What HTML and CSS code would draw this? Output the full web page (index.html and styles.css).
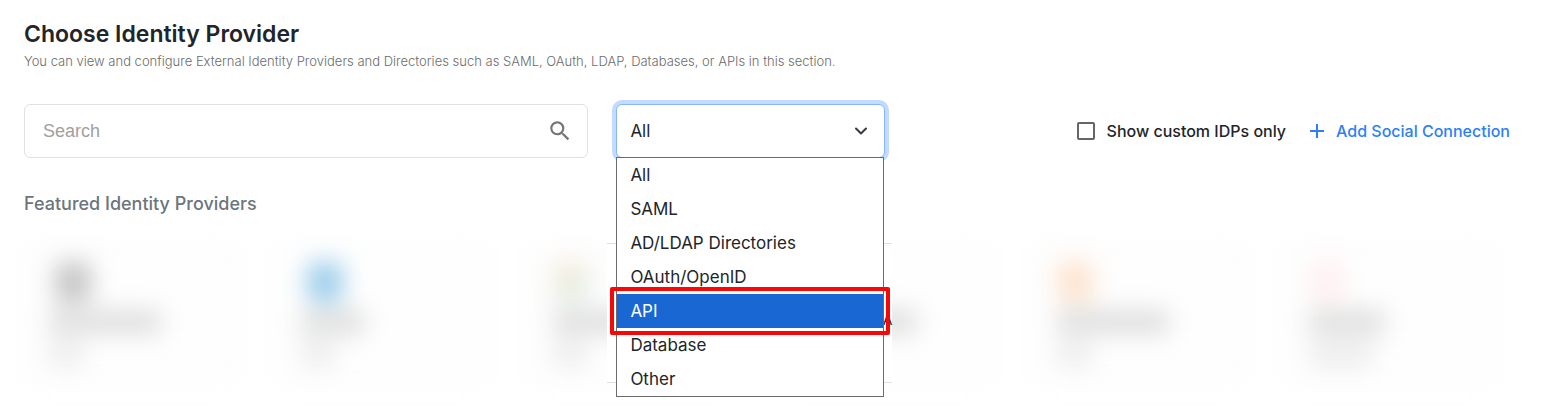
FILE: index.html
```html
<!DOCTYPE html>
<html lang="en">

<head>
  <meta charset="utf-8" />
  <meta name="viewport" content="width=device-width, initial-scale=1">
  <title>Choose Identity Provider</title>
  <link rel="stylesheet" href="styles.css">
</head>

<body>
  <main class="page">
    <h1 class="title">Choose Identity Provider</h1>
    <p class="subtitle">You can view and configure External Identity Providers and Directories such as SAML, OAuth, LDAP, Databases, or APIs in this section.</p>

    <div class="toolbar">
      <div class="search">
        <input type="text" id="search" placeholder="Search" aria-label="Search">
        <svg class="search-icon" viewBox="0 0 24 24" width="26" height="26" aria-hidden="true">
          <path fill="#757575" d="M15.5 14h-.79l-.28-.27A6.471 6.471 0 0 0 16 9.5 6.5 6.5 0 1 0 9.5 16c1.61 0 3.09-.59 4.23-1.57l.27.28v.79l5 4.99L20.49 19l-4.99-5zm-6 0C7.01 14 5 11.99 5 9.5S7.01 5 9.5 5 14 7.01 14 9.5 11.99 14 9.5 14z" />
        </svg>
      </div>

      <div class="filter">
        <select id="type" aria-label="Provider type">
          <option>All</option>
          <option>SAML</option>
          <option>AD/LDAP Directories</option>
          <option>OAuth/OpenID</option>
          <option>API</option>
          <option>Database</option>
          <option>Other</option>
        </select>
        <svg class="chevron" viewBox="0 0 16 16" width="16" height="16" aria-hidden="true">
          <path fill="none" stroke="#343a40" stroke-width="2" stroke-linecap="round" stroke-linejoin="round" d="m3 5.500 5 5 5-5" />
        </svg>
        <div class="backdrop"><span>A</span></div>
        <ul class="menu" role="listbox" aria-label="Provider type">
          <li role="option">All</li>
          <li role="option">SAML</li>
          <li role="option">AD/LDAP Directories</li>
          <li role="option">OAuth/OpenID</li>
          <li role="option" class="active" aria-selected="true">API</li>
          <li role="option">Database</li>
          <li role="option">Other</li>
        </ul>
      </div>

      <div class="actions">
        <label class="check" for="custom"><input type="checkbox" id="custom">Show custom IDPs only</label>
        <a class="add" href="#">
          <svg viewBox="0 0 14 14" width="14" height="14" aria-hidden="true">
            <path stroke="#2d7ff9" stroke-width="2" d="M7 0v14M0 7h14" />
          </svg>
          Add Social Connection
        </a>
      </div>
    </div>

    <h2 class="section-title">Featured Identity Providers</h2>

    <div class="cards">
      <div class="card">
        <span class="logo dark"></span>
        <span class="bar wide"></span>
        <span class="bar tiny"></span>
      </div>
      <div class="card">
        <span class="logo blue"></span>
        <span class="bar"></span>
        <span class="bar tiny"></span>
      </div>
      <div class="card">
        <span class="logo multi"></span>
        <span class="bar mid"></span>
        <span class="bar tiny"></span>
      </div>
      <div class="card">
        <span class="logo"></span>
        <span class="bar wide"></span>
      </div>
      <div class="card">
        <span class="logo orange"></span>
        <span class="bar wide"></span>
        <span class="bar tiny"></span>
      </div>
      <div class="card">
        <span class="logo pink"></span>
        <span class="bar mid"></span>
        <span class="bar small"></span>
      </div>
    </div>
  </main>
</body>

</html>
```
FILE: styles.css
```css
* {
  box-sizing: border-box;
}

body {
  margin: 0;
  background-color: #fff;
  color: #212529;
  font-family: Inter, "Open Sans", sans-serif;
  font-size: 16px;
}

.page {
  padding: 20px 24px 24px;
}

.title {
  margin: 0;
  font-size: 23px;
  line-height: 28px;
  font-weight: 600;
}

.subtitle {
  margin: 3px 0 0;
  font-size: 13px;
  line-height: 20px;
  font-weight: 300;
  color: #6c6c6c;
}

.toolbar {
  display: flex;
  align-items: center;
  margin-top: 33px;
}

.search {
  display: flex;
  align-items: center;
  flex: 0 0 37.5%;
  height: 54px;
  padding: 0 14px 0 18px;
  border: 1px solid #dee2e6;
  border-radius: 6px;
}

.search input {
  flex: 1;
  min-width: 0;
  padding: 0;
  border: 0;
  outline: 0;
  background: none;
  font-family: "Liberation Sans", Arial, sans-serif;
  font-size: 18px;
}

.search input::placeholder {
  color: #a0a0a0;
}

.filter {
  position: relative;
  z-index: 1;
  flex: 0 0 269px;
  margin-left: 28px;
}

.filter select {
  display: block;
  width: 100%;
  height: 54px;
  padding: 0 13px;
  appearance: none;
  border: 1px solid #86b7fe;
  border-radius: 6px;
  background-color: #fff;
  box-shadow: 0 0 0 4px #c2dbfe;
  color: #212529;
  font-family: inherit;
  font-size: 17px;
}

.chevron {
  position: absolute;
  top: 19px;
  right: 16px;
}

.menu {
  position: absolute;
  top: 53px;
  left: 0;
  width: 268px;
  margin: 0;
  padding: 0;
  border: 1px solid #6b6b6b;
  background-color: #fff;
  list-style: none;
}

.menu li {
  padding-left: 13px;
  font-size: 17px;
  line-height: 34px;
}

.menu .active {
  position: relative;
  background-color: #1967d2;
  color: #fff;
}

/* marker around the active option */
.menu .active::after {
  content: "";
  position: absolute;
  inset: -7px;
  border: 4px solid #f90606;
  border-radius: 2px;
}

/* keeps the row behind the open menu sharp */
.backdrop {
  position: absolute;
  top: 139px;
  left: -9px;
  width: 285px;
  height: 140px;
  border-top: 1px solid #dee2e6;
  border-bottom: 1px solid #dee2e6;
  background-color: #fff;
  text-align: right;
  font-size: 14px;
  line-height: 152px;
}

.actions {
  display: flex;
  align-items: center;
  gap: 24px;
  margin-left: auto;
  padding-right: 19px;
  font-size: 16px;
  font-weight: 500;
}

.check {
  display: flex;
  align-items: center;
  gap: 12px;
}

.check input {
  width: 18px;
  height: 18px;
  margin: 0;
  appearance: none;
  border: 2px solid #666;
  border-radius: 2px;
  background-color: #fff;
}

.add {
  display: flex;
  align-items: center;
  gap: 12px;
  color: #2d7ff9;
  text-decoration: none;
}

.section-title {
  margin: 34px 0 0;
  font-size: 18px;
  line-height: 24px;
  font-weight: 500;
  color: #6c757d;
}

.cards {
  display: grid;
  grid-template-columns: repeat(6, 1fr);
  gap: 40px;
  margin: 27px 33px 0 0;
  filter: blur(12px);
}

.card {
  height: 140px;
  padding: 18px 24px;
  border: 1px solid #eee;
  background-color: #fefefe;
}

.logo {
  display: block;
  width: 36px;
  height: 40px;
  margin-left: 6px;
  border-radius: 8px;
}

.dark {
  background-color: #c4c4c4;
}

.blue {
  background-color: #9ccdec;
}

.multi {
  margin-left: 0;
  background: linear-gradient(150deg, #fbe9d4, #d9f0ea);
}

.orange {
  margin-left: 0;
  background-color: #fde3ce;
}

.pink {
  margin-left: 0;
  background-color: #fff0f0;
}

.bar {
  display: block;
  width: 64px;
  height: 24px;
  margin-top: 8px;
  background-color: #dedede;
}

.wide {
  width: 112px;
}

.mid {
  width: 76px;
}

.small {
  width: 64px;
  background-color: #ececec;
}

.tiny {
  width: 34px;
  background-color: #ececec;
}
```
